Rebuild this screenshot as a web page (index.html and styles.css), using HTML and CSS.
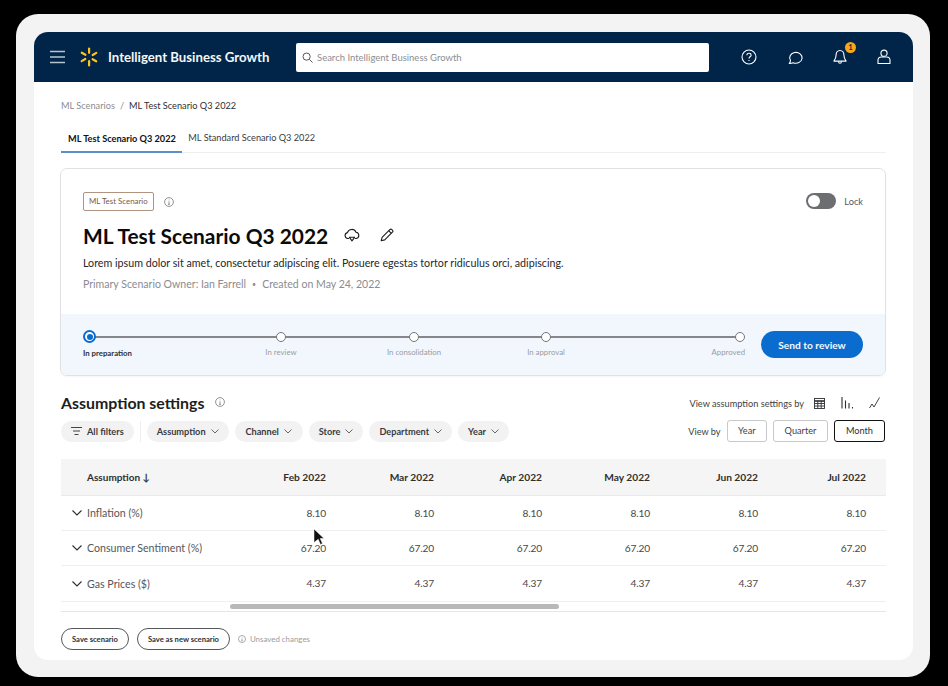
FILE: index.html
```html
<!DOCTYPE html>
<html lang="en">
<head>
<meta charset="utf-8">
<title>Intelligent Business Growth</title>
<link rel="stylesheet" href="styles.css">
</head>
<body>
<div class="bezel">
<div class="app">
  <header class="topbar">
    <svg class="menu" width="16" height="14" viewBox="0 0 16 14"><path d="M0 1.500h15M0 7h15M0 12.500h15" stroke="#b9c3d0" stroke-width="1.400" fill="none"/></svg>
    <svg class="spark" width="20" height="20" viewBox="0 0 20 20" fill="#ffc220"><rect x="9" y="0.500" width="2.200" height="6.400" rx="1.100"/><rect x="9" y="13.100" width="2.200" height="6.400" rx="1.100"/><rect x="9" y="0.500" width="2.200" height="6.400" rx="1.100" transform="rotate(60 10 10)"/><rect x="9" y="0.500" width="2.200" height="6.400" rx="1.100" transform="rotate(120 10 10)"/><rect x="9" y="0.500" width="2.200" height="6.400" rx="1.100" transform="rotate(240 10 10)"/><rect x="9" y="0.500" width="2.200" height="6.400" rx="1.100" transform="rotate(300 10 10)"/></svg>
    <span class="brand">Intelligent Business Growth</span>
    <div class="search">
      <svg width="11" height="11" viewBox="0 0 11 11" fill="none" stroke="#55585c" stroke-width="1"><circle cx="4.600" cy="4.600" r="3.600"/><path d="M7.300 7.300l3.200 3.200"/></svg>
      <span>Search Intelligent Business Growth</span>
    </div>
    <div class="top-icons">
      <svg width="16" height="16" viewBox="0 0 16 16" fill="none" stroke="#fff" stroke-width="1.100"><circle cx="8" cy="8" r="7"/><path d="M5.900 6.300c0-1.200 1-2 2.100-2s2.100.8 2.100 1.900c0 1.600-2.100 1.600-2.100 3.200"/><path d="M8 11v1.100"/></svg>
      <svg class="chat" width="16" height="16" viewBox="0 0 16 16" fill="none" stroke="#fff" stroke-width="1.100"><path d="M1.200 14.400c.8-.8 1.300-1.800 1.300-2.900A6.200 5.400 0 1 1 5.200 13.700c-1.300.6-2.600.8-4 .7z" stroke-linejoin="round"/></svg>
      <span class="bell">
        <svg width="14" height="16" viewBox="0 0 14 16" fill="none" stroke="#fff" stroke-width="1.100"><path d="M7 1.500c-2.600 0-3.900 2-3.900 4.400 0 3-1.100 4.800-2.200 6.200h12.200c-1.100-1.400-2.200-3.200-2.200-6.200C10.900 3.500 9.600 1.500 7 1.500z" stroke-linejoin="round"/><path d="M5.500 12.500c0 2.300 3 2.300 3 0"/></svg>
        <span class="badge">1</span>
      </span>
      <svg width="14" height="16" viewBox="0 0 14 16" fill="none" stroke="#fff" stroke-width="1.100"><circle cx="7" cy="4.200" r="3.100"/><path d="M1 14.500v-3.200c0-2 1.500-3.300 3.300-3.300h5.400c1.800 0 3.300 1.300 3.300 3.300v3.200z" stroke-linejoin="round"/></svg>
    </div>
  </header>

  <main class="content">
    <nav class="crumbs"><span class="crumb-link">ML Scenarios</span><span class="crumb-sep">/</span><span>ML Test Scenario Q3 2022</span></nav>
    <div class="tabs">
      <span class="tab active">ML Test Scenario Q3 2022</span>
      <span class="tab">ML Standard Scenario Q3 2022</span>
    </div>

    <section class="card">
      <div class="card-body">
        <div class="tag-row">
          <span class="tag">ML Test Scenario</span>
          <svg class="info" width="10" height="10" viewBox="0 0 10 10" fill="none" stroke="#74767c" stroke-width=".8"><circle cx="5" cy="5" r="4.400"/><path d="M5 4.400v3M4.200 7.400h1.600M5 2.600v.7"/></svg>
          <span class="lock"><span class="switch"><span class="knob"></span></span><span>Lock</span></span>
        </div>
        <div class="title-row">
          <h1>ML Test Scenario Q3 2022</h1>
          <svg class="cloud" width="16" height="15" viewBox="0 0 16 15" fill="none" stroke="#1d1e20" stroke-width="1.100" stroke-linejoin="round"><path d="M5 10.500H3.800A3 3 0 0 1 3.400 4.600 4.600 4.600 0 0 1 12 4.200a3.200 3.200 0 0 1 .3 6.300H11"/><path d="M5.400 9.300L8 12.800l2.600-3.500z"/></svg>
          <svg class="pencil" width="14" height="14" viewBox="0 0 14 14" fill="none" stroke="#1d1e20" stroke-width="1.100" stroke-linejoin="round"><path d="M1.200 12.800l.9-3.500L9.800 1.600a1.500 1.500 0 0 1 2.100 0l.5.500a1.500 1.500 0 0 1 0 2.100L4.700 11.900z"/><path d="M8.700 2.700l2.600 2.600"/></svg>
        </div>
        <p class="desc">Lorem ipsum dolor sit amet, consectetur adipiscing elit. Posuere egestas tortor ridiculus orci, adipiscing.</p>
        <p class="meta">Primary Scenario Owner: Ian Farrell<span class="meta-dot">•</span>Created on May 24, 2022</p>
      </div>
      <div class="progress">
        <ol class="steps">
          <li class="step current"><span class="dot"></span><span class="step-label">In preparation</span></li>
          <li class="step"><span class="dot"></span><span class="step-label">In review</span></li>
          <li class="step"><span class="dot"></span><span class="step-label">In consolidation</span></li>
          <li class="step"><span class="dot"></span><span class="step-label">In approval</span></li>
          <li class="step last"><span class="dot"></span><span class="step-label">Approved</span></li>
        </ol>
        <button class="primary">Send to review</button>
      </div>
    </section>

    <div class="settings-head">
      <div class="settings-title">
        <h2>Assumption settings</h2>
        <svg width="10" height="10" viewBox="0 0 10 10" fill="none" stroke="#74767c" stroke-width=".8"><circle cx="5" cy="5" r="4.400"/><path d="M5 4.400v3M4.200 7.400h1.600M5 2.600v.7"/></svg>
      </div>
      <div class="view-icons">
        <span>View assumption settings by</span>
        <svg width="11" height="11" viewBox="0 0 11 11" fill="none" stroke="#2e2f32" stroke-width=".9"><rect x=".5" y=".5" width="10" height="10"/><path d="M.5 3h10" stroke-width="1.600"/><path d="M.5 5.500h10M.5 8h10M3.800 3v7.500M7.200 3v7.500"/></svg>
        <svg width="12" height="12" viewBox="0 0 12 12" fill="none" stroke="#2e2f32" stroke-width="1.100"><path d="M1 0v11.500M4.500 3.500v8M8 6v5.500M11.500 10v1.500"/></svg>
        <svg width="12" height="12" viewBox="0 0 12 12" fill="none" stroke="#2e2f32" stroke-width=".9"><path d="M.5 11l2.500-4 2 3L10.500.5"/></svg>
      </div>
    </div>

    <div class="filter-row">
      <div class="filters">
        <span class="chip all"><svg width="11" height="8" viewBox="0 0 11 8" fill="none" stroke="#2e2f32" stroke-width=".9"><path d="M0 .5h11M2 4h7M3.500 7.500h4"/></svg>All filters</span>
        <span class="divider"></span>
        <span class="chip">Assumption<svg class="chev" width="8" height="5" viewBox="0 0 8 5"><path d="M.5.500L4 4 7.500.5"/></svg></span>
        <span class="chip wide">Channel<svg class="chev" width="8" height="5" viewBox="0 0 8 5"><path d="M.5.500L4 4 7.500.5"/></svg></span>
        <span class="chip">Store<svg class="chev" width="8" height="5" viewBox="0 0 8 5"><path d="M.5.500L4 4 7.500.5"/></svg></span>
        <span class="chip">Department<svg class="chev" width="8" height="5" viewBox="0 0 8 5"><path d="M.5.500L4 4 7.500.5"/></svg></span>
        <span class="chip">Year<svg class="chev" width="8" height="5" viewBox="0 0 8 5"><path d="M.5.500L4 4 7.500.5"/></svg></span>
      </div>
      <div class="view-by">
        <span class="view-label">View by</span>
        <span class="seg">Year</span>
        <span class="seg">Quarter</span>
        <span class="seg selected">Month</span>
      </div>
    </div>

    <table class="grid">
      <thead>
        <tr><th class="name">Assumption ↓</th><th>Feb 2022</th><th>Mar 2022</th><th>Apr 2022</th><th>May 2022</th><th>Jun 2022</th><th>Jul 2022</th></tr>
      </thead>
      <tbody>
        <tr><td class="name"><svg class="row-chev" width="10" height="6" viewBox="0 0 10 6"><path d="M.5.500L5 5 9.500.5"/></svg>Inflation (%)</td><td>8.10</td><td>8.10</td><td>8.10</td><td>8.10</td><td>8.10</td><td>8.10</td></tr>
        <tr><td class="name"><svg class="row-chev" width="10" height="6" viewBox="0 0 10 6"><path d="M.5.500L5 5 9.500.5"/></svg>Consumer Sentiment (%)</td><td>67.20</td><td>67.20</td><td>67.20</td><td>67.20</td><td>67.20</td><td>67.20</td></tr>
        <tr><td class="name"><svg class="row-chev" width="10" height="6" viewBox="0 0 10 6"><path d="M.5.500L5 5 9.500.5"/></svg>Gas Prices ($)</td><td>4.37</td><td>4.37</td><td>4.37</td><td>4.37</td><td>4.37</td><td>4.37</td></tr>
      </tbody>
    </table>
    <div class="scroll-track"><span class="scroll-thumb"></span></div>

    <div class="actions">
      <button class="outline">Save scenario</button>
      <button class="outline">Save as new scenario</button>
      <span class="unsaved"><svg width="8" height="8" viewBox="0 0 10 10" fill="none" stroke="#8a8c91" stroke-width=".9"><circle cx="5" cy="5" r="4.400"/><path d="M5 4.400v3M4.200 7.400h1.600M5 2.600v.7"/></svg>Unsaved changes</span>
    </div>
  </main>

  <svg class="cursor" width="11" height="16" viewBox="0 0 11 16"><path d="M0 0l10 9.500H6.200l2.300 5-2 1-2.300-5.200L0 13.500z" fill="#111" stroke="#fff" stroke-width=".5"/></svg>
</div>
</div>
</body>
</html>
```
FILE: styles.css
```css
* { box-sizing: border-box; }
html, body { margin: 0; height: 100%; }
body {
  background: #000;
  font-family: Lato, "Open Sans", "Liberation Sans", sans-serif;
  color: #2e2f32;
  overflow: hidden;
}
.bezel {
  width: 914px;
  height: 663px;
  margin: 14px 0 0 16px;
  padding: 18px 17px 17px 18px;
  background: #f3f3f3;
  border-radius: 22px;
}
.app {
  position: relative;
  height: 628px;
  background: #fff;
  border-radius: 14px;
  overflow: hidden;
}
.topbar {
  display: flex;
  align-items: center;
  height: 50px;
  padding-left: 16px;
  background: #002548;
}
.menu { flex: none; }
.spark { flex: none; margin-left: 13px; }
.brand { margin-left: 9px; width: 180px; font-size: 13.200px; font-weight: 700; color: #f4f6f8; white-space: nowrap; }
.search {
  display: flex;
  align-items: center;
  gap: 4px;
  width: 413px;
  height: 29px;
  margin-left: 8px;
  padding-left: 6px;
  background: #fff;
  border-radius: 2px;
  font-size: 9.500px;
  color: #8c8e93;
}
.top-icons { display: flex; align-items: center; gap: 30px; margin-left: 32px; }
.chat { margin-left: 1px; margin-right: -1px; }
.bell { position: relative; display: flex; }
.badge {
  position: absolute;
  top: -7px;
  left: 12px;
  width: 11px;
  height: 11px;
  border-radius: 50%;
  background: #f3a81d;
  color: #1c1c1c;
  font-size: 7px;
  font-weight: 700;
  line-height: 11px;
  text-align: center;
}
.content { padding: 0 27px; }
.crumbs { display: flex; gap: 5px; height: 17px; margin-top: 15px; font-size: 9.200px; line-height: 17px; color: #2e2f32; }
.crumb-link, .crumb-sep { color: #8a8c91; }
.tabs {
  display: flex;
  gap: 6px;
  height: 31px;
  margin-top: 8px;
  border-bottom: 1px solid #eeeff0;
  font-size: 9.200px;
}
.tab { padding: 9px 0 0; height: 31px; line-height: 14px; color: #3b3c40; }
.tab.active { padding: 10px 6.500px 0 7px; font-weight: 700; color: #111; border-bottom: 2px solid #5a8fca; }
.card {
  width: 826px;
  height: 208px;
  margin: 15px 0 0 -1px;
  border: 1px solid #dfe1e4;
  border-radius: 7px;
  overflow: hidden;
  box-shadow: 0 1px 2px rgba(0,0,0,.04);
}
.card-body { height: 145px; padding: 23px 22px 0; }
.tag-row { display: flex; align-items: center; height: 19px; }
.tag {
  height: 19px;
  padding: 0 5px;
  border: 1px solid #b09480;
  border-radius: 2px;
  font-size: 7.900px;
  line-height: 17px;
  color: #7a5a45;
}
.info { margin-left: 10px; }
.lock { display: flex; align-items: center; gap: 8px; margin-left: auto; margin-top: -1px; font-size: 9.200px; color: #55575b; }
.switch { display: block; width: 30px; height: 16px; padding: 2px; background: #6d6e72; border-radius: 8px; }
.knob { display: block; width: 12px; height: 12px; background: #fff; border-radius: 50%; }
.title-row { display: flex; align-items: center; height: 30px; margin-top: 9px; }
h1 { margin: 0; font-size: 20.900px; font-weight: 700; color: #0b0b0c; white-space: nowrap; }
.cloud { margin-left: 16px; }
.pencil { margin-left: 20px; }
.desc { margin: 6px 0 0; font-size: 10.700px; line-height: 14px; color: #26272a; }
.meta { margin: 7px 0 0; font-size: 10.550px; line-height: 14px; color: #8a8c91; }
.meta-dot { margin: 0 6px; font-size: 7px; vertical-align: 1px; }
.progress {
  display: flex;
  align-items: flex-start;
  height: 61px;
  padding: 16px 22px 0;
  background: #f2f7fd;
}
.steps {
  position: relative;
  display: grid;
  grid-template-columns: 132px 132px 134px 130px 134px;
  width: 662px;
  margin: 0;
  padding: 0;
  list-style: none;
}
.steps::before {
  content: "";
  position: absolute;
  top: 6px;
  left: 6px;
  right: 4px;
  height: 1.500px;
  background: #85878b;
}
.step { position: relative; display: flex; flex-direction: column; align-items: center; }
.step.current { align-items: flex-start; }
.step.last { align-items: flex-end; }
.dot { width: 10px; height: 10px; margin-top: 2px; background: #fff; border: 1px solid #74767a; border-radius: 50%; }
.current .dot { width: 13px; height: 13px; margin-top: 0; border: 2.500px solid #0a6ccf; position: relative; }
.current .dot::after { content: ""; position: absolute; inset: 1.500px; background: #0a6ccf; border-radius: 50%; }
.step-label { margin-top: 4px; font-size: 7.800px; line-height: 12px; color: #9a9ca0; white-space: nowrap; }
.current .step-label { font-weight: 700; color: #2e2f32; }
.primary {
  width: 102px;
  height: 27px;
  margin-top: 1px;
  margin-left: auto;
  border: 0;
  border-radius: 14px;
  background: #0a6ccf;
  color: #f4f8fd;
  font: 700 10.200px Lato, sans-serif;
}
.settings-head { display: flex; justify-content: space-between; align-items: center; height: 20px; margin-top: 16px; }
.settings-title { display: flex; align-items: center; gap: 11px; }
h2 { margin: 0; font-size: 15.900px; font-weight: 700; color: #1d1e20; }
.view-icons { display: flex; align-items: center; gap: 10px; padding: 2px 5px 0 0; font-size: 9.200px; color: #3e3f43; }
.view-icons svg:nth-of-type(2) { margin-left: 6px; }
.view-icons svg:nth-of-type(3) { margin-left: 6px; }
.filter-row { display: flex; justify-content: space-between; align-items: center; height: 22px; margin-top: 8px; padding-right: 1px; }
.filters { display: flex; align-items: center; gap: 6px; }
.chip {
  display: flex;
  align-items: center;
  gap: 5px;
  height: 21px;
  padding: 0 10px;
  background: #f2f2f2;
  border-radius: 11px;
  font-size: 9.200px;
  font-weight: 700;
  color: #3a3b3f;
  white-space: nowrap;
}
.chip.wide { padding: 0 10.800px; }
.divider { width: 1px; height: 21px; background: #eeeeee; }
.chev { fill: none; stroke: #55575b; stroke-width: .9; }
.view-by { display: flex; align-items: center; gap: 6px; font-size: 9.200px; color: #3e3f43; }
.seg {
  height: 22px;
  padding: 0 10.500px;
  border: 1px solid #c8c9cc;
  border-radius: 3px;
  line-height: 20px;
  text-align: center;
}
.seg.selected { border-color: #111; border-width: 1.500px; line-height: 19px; padding: 0 11px; color: #2e2f32; }
.grid { width: 825px; margin-top: 17px; border-collapse: collapse; table-layout: fixed; font-size: 10.200px; }
.grid thead tr { height: 36px; background: #f5f5f5; border-bottom: 1px solid #eaeaea; }
.grid th { width: 108px; text-align: right; font-size: 10.200px; font-weight: 700; color: #2e2f32; padding: 0; }
.grid th:last-child, .grid td:last-child { width: 128px; padding-right: 20px; }
.grid th.name { width: 157px; text-align: left; padding-left: 26px; font-size: 10px; }
.grid tbody tr { height: 35px; border-bottom: 1px solid #efefef; }
.grid tbody tr:last-child { height: 36px; }
.grid td { text-align: right; padding: 0; color: #47484c; letter-spacing: -.15px; }
.grid td.name { text-align: left; white-space: nowrap; color: #55575b; font-size: 10.650px; letter-spacing: 0; }
.row-chev { margin: 0 5px 1px 11px; fill: none; stroke: #2e2f32; stroke-width: 1.100; }
.scroll-track {
  height: 10px;
  padding: 2px 0 0 169px;
  border-bottom: 1px solid #e6e6e6;
}
.scroll-thumb { display: block; width: 329px; height: 5px; background: #b9b9b9; border-radius: 3px; }
.actions { display: flex; align-items: center; gap: 8px; margin-top: 16px; }
.outline {
  height: 22px;
  padding: 0 10px;
  background: #fff;
  border: 1px solid #55575b;
  border-radius: 11px;
  color: #2e2f32;
  font: 700 7.600px Lato, sans-serif;
  white-space: nowrap;
}
.unsaved { display: flex; align-items: center; gap: 4px; font-size: 7.900px; color: #9a9ca0; }
.cursor { position: absolute; left: 280px; top: 497px; }
```
